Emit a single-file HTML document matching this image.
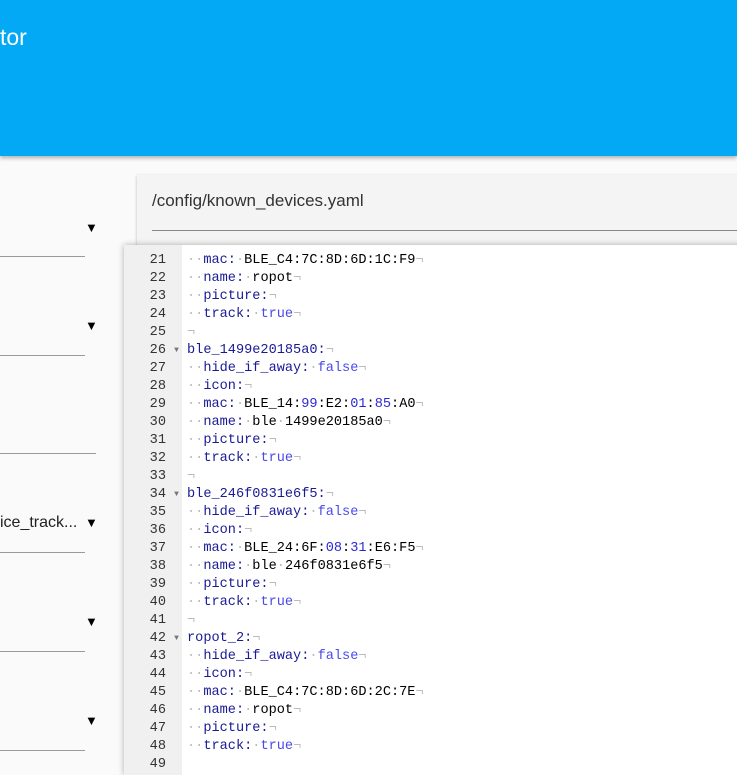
<!DOCTYPE html>
<html><head><meta charset="utf-8"><style>
body{margin:0;width:737px;height:767px;overflow:hidden;background:#fafafa;font-family:"Liberation Sans",sans-serif;position:relative}
.hdr{position:absolute;left:0;top:0;width:737px;height:156px;background:#03a9f4;box-shadow:0 2px 4px rgba(0,0,0,.3)}
.hdr span{position:absolute;left:0;top:24px;color:#fff;font-size:23px}
.ul{position:absolute;left:0;height:1px;background:#9a9a9a}
.ar{position:absolute;left:85px;font-size:13px;color:#000}
.lt{position:absolute;left:0;font-size:16px;color:#222}
.card{position:absolute;left:137px;top:175px;width:620px;height:600px;background:#f4f4f4;box-shadow:0 1px 3px rgba(0,0,0,.25)}
.card .t{position:absolute;left:15px;top:16px;font-size:17px;color:#333}
.card .u{position:absolute;left:15px;top:55px;width:600px;height:1px;background:#888}
.ed{position:absolute;left:124px;top:245px;width:620px;height:530px;background:#fff;box-shadow:0 0 6px rgba(0,0,0,.3);overflow:hidden}
.gut{position:absolute;left:0;top:0;width:58px;height:100%;background:#f0f0f0}
.code{position:absolute;left:0;top:-11px;font-family:"Liberation Mono",monospace;font-size:13.6px;line-height:18px;white-space:pre}
.ln{display:inline-block;width:42px;text-align:right;color:#333}
.fd{display:inline-block;width:21px;text-align:center;color:#777;font-size:8px;vertical-align:1px}
.k{color:#1a1a96}.b{color:#4a4ae8}.n{color:#2a2ad8}.g{color:#bbb}
</style></head><body>
<div class="hdr"><span>tor</span></div>
<div class="ar" style="top:220px">▼</div><div class="ul" style="top:256px;width:85px"></div>
<div class="ar" style="top:318px">▼</div><div class="ul" style="top:355px;width:85px"></div>
<div class="ul" style="top:453px;width:96px"></div>
<div class="lt" style="top:514px">ice_track...</div><div class="ar" style="top:515px">▼</div><div class="ul" style="top:552px;width:85px"></div>
<div class="ar" style="top:614px">▼</div><div class="ul" style="top:651px;width:85px"></div>
<div class="ar" style="top:713px">▼</div><div class="ul" style="top:750px;width:85px"></div>
<div class="card"><div class="t">/config/known_devices.yaml</div><div class="u"></div></div>
<div class="ed"><div class="gut"></div><div class="code"><span class="ln">20</span><span class="fd"></span><span class="g">··</span><span class="k">icon:</span><span class="g">¬</span>
<span class="ln">21</span><span class="fd"></span><span class="g">··</span><span class="k">mac:</span><span class="g">·</span>BLE_C4:7C:8D:6D:1C:F9<span class="g">¬</span>
<span class="ln">22</span><span class="fd"></span><span class="g">··</span><span class="k">name:</span><span class="g">·</span>ropot<span class="g">¬</span>
<span class="ln">23</span><span class="fd"></span><span class="g">··</span><span class="k">picture:</span><span class="g">¬</span>
<span class="ln">24</span><span class="fd"></span><span class="g">··</span><span class="k">track:</span><span class="g">·</span><span class="b">true</span><span class="g">¬</span>
<span class="ln">25</span><span class="fd"></span><span class="g">¬</span>
<span class="ln">26</span><span class="fd">▼</span><span class="k">ble_1499e20185a0:</span><span class="g">¬</span>
<span class="ln">27</span><span class="fd"></span><span class="g">··</span><span class="k">hide_if_away:</span><span class="g">·</span><span class="b">false</span><span class="g">¬</span>
<span class="ln">28</span><span class="fd"></span><span class="g">··</span><span class="k">icon:</span><span class="g">¬</span>
<span class="ln">29</span><span class="fd"></span><span class="g">··</span><span class="k">mac:</span><span class="g">·</span>BLE_14:<span class="n">99</span>:E2:<span class="n">01</span>:<span class="n">85</span>:A0<span class="g">¬</span>
<span class="ln">30</span><span class="fd"></span><span class="g">··</span><span class="k">name:</span><span class="g">·</span>ble<span class="g">·</span>1499e20185a0<span class="g">¬</span>
<span class="ln">31</span><span class="fd"></span><span class="g">··</span><span class="k">picture:</span><span class="g">¬</span>
<span class="ln">32</span><span class="fd"></span><span class="g">··</span><span class="k">track:</span><span class="g">·</span><span class="b">true</span><span class="g">¬</span>
<span class="ln">33</span><span class="fd"></span><span class="g">¬</span>
<span class="ln">34</span><span class="fd">▼</span><span class="k">ble_246f0831e6f5:</span><span class="g">¬</span>
<span class="ln">35</span><span class="fd"></span><span class="g">··</span><span class="k">hide_if_away:</span><span class="g">·</span><span class="b">false</span><span class="g">¬</span>
<span class="ln">36</span><span class="fd"></span><span class="g">··</span><span class="k">icon:</span><span class="g">¬</span>
<span class="ln">37</span><span class="fd"></span><span class="g">··</span><span class="k">mac:</span><span class="g">·</span>BLE_24:6F:<span class="n">08</span>:<span class="n">31</span>:E6:F5<span class="g">¬</span>
<span class="ln">38</span><span class="fd"></span><span class="g">··</span><span class="k">name:</span><span class="g">·</span>ble<span class="g">·</span>246f0831e6f5<span class="g">¬</span>
<span class="ln">39</span><span class="fd"></span><span class="g">··</span><span class="k">picture:</span><span class="g">¬</span>
<span class="ln">40</span><span class="fd"></span><span class="g">··</span><span class="k">track:</span><span class="g">·</span><span class="b">true</span><span class="g">¬</span>
<span class="ln">41</span><span class="fd"></span><span class="g">¬</span>
<span class="ln">42</span><span class="fd">▼</span><span class="k">ropot_2:</span><span class="g">¬</span>
<span class="ln">43</span><span class="fd"></span><span class="g">··</span><span class="k">hide_if_away:</span><span class="g">·</span><span class="b">false</span><span class="g">¬</span>
<span class="ln">44</span><span class="fd"></span><span class="g">··</span><span class="k">icon:</span><span class="g">¬</span>
<span class="ln">45</span><span class="fd"></span><span class="g">··</span><span class="k">mac:</span><span class="g">·</span>BLE_C4:7C:8D:6D:2C:7E<span class="g">¬</span>
<span class="ln">46</span><span class="fd"></span><span class="g">··</span><span class="k">name:</span><span class="g">·</span>ropot<span class="g">¬</span>
<span class="ln">47</span><span class="fd"></span><span class="g">··</span><span class="k">picture:</span><span class="g">¬</span>
<span class="ln">48</span><span class="fd"></span><span class="g">··</span><span class="k">track:</span><span class="g">·</span><span class="b">true</span><span class="g">¬</span>
<span class="ln">49</span><span class="fd"></span></div></div>
</body></html>
